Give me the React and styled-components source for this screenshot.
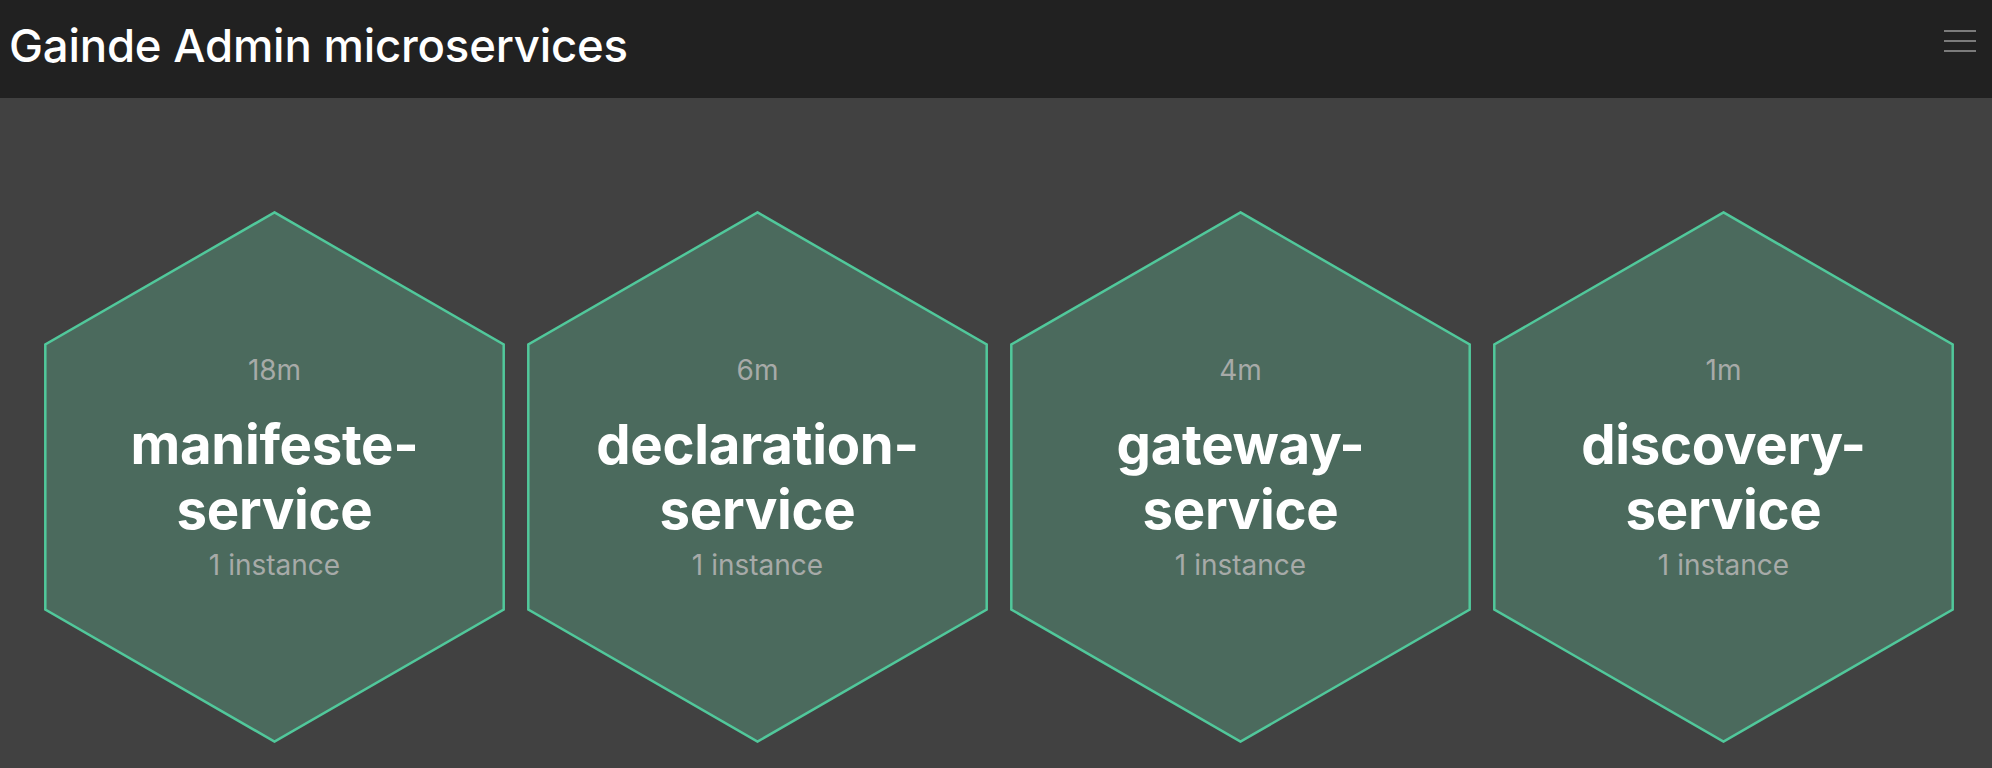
import React from "react";
import styled, { createGlobalStyle } from "styled-components";

const GlobalStyle = createGlobalStyle`
  html, body {
    margin: 0;
    padding: 0;
    background: #414141;
    font-family: Inter, "Noto Sans", "Liberation Sans", sans-serif;
    -webkit-font-smoothing: antialiased;
  }
  * { box-sizing: border-box; }
`;

const Page = styled.div`
  min-height: 768px;
  background: #414141;
  display: flex;
  flex-direction: column;
`;

const TopBar = styled.header`
  height: 98px;
  background: #212121;
  display: flex;
  align-items: center;
  justify-content: space-between;
  padding: 0 16px 0 9px;
`;

const Title = styled.h1`
  margin: 0;
  margin-top: -7px;
  font-size: 45.5px;
  font-weight: 500;
  color: #ffffff;
  letter-spacing: -0.2px;
`;

const MenuButton = styled.button`
  background: none;
  border: none;
  padding: 0;
  width: 32px;
  height: 22px;
  margin-top: -16px;
  display: flex;
  flex-direction: column;
  justify-content: space-between;
  cursor: pointer;
`;

const MenuLine = styled.span`
  display: block;
  height: 2px;
  width: 32px;
  background: #7b7b7b;
`;

const Hive = styled.main`
  display: flex;
  gap: 22px;
  padding: 113px 0 0 44px;
`;

const HexCard = styled.div`
  position: relative;
  width: 461px;
  height: 532px;
  flex: none;
  display: flex;
  flex-direction: column;
  align-items: center;
  justify-content: flex-start;
  padding-top: 142px;
  text-align: center;
`;

const HexShape = styled.svg`
  position: absolute;
  inset: 0;
  width: 100%;
  height: 100%;
  z-index: 0;
`;

const Age = styled.div`
  position: relative;
  font-size: 28px;
  line-height: 34px;
  color: #a7aaa8;
`;

const ServiceName = styled.div`
  position: relative;
  margin-top: 25px;
  max-width: 390px;
  font-size: 54.5px;
  font-weight: 700;
  line-height: 65px;
  color: #ffffff;
  letter-spacing: -0.3px;
`;

const Instances = styled.div`
  position: relative;
  margin-top: 6px;
  font-size: 28px;
  line-height: 34px;
  color: #a7aaa8;
`;

const services = [
  { name: "manifeste-service", age: "18m", instances: 1 },
  { name: "declaration-service", age: "6m", instances: 1 },
  { name: "gateway-service", age: "4m", instances: 1 },
  { name: "discovery-service", age: "1m", instances: 1 },
];

function Hexagon() {
  return (
    <HexShape viewBox="0 0 461 532" preserveAspectRatio="none">
      <polygon
        points="230.5,1.4 459.7,133.5 459.7,398.5 230.5,530.6 1.3,398.5 1.3,133.5"
        fill="#4b6a5d"
        stroke="#51c89b"
        strokeWidth="2.5"
      />
    </HexShape>
  );
}

export default function App() {
  return (
    <>
      <GlobalStyle />
      <Page>
        <TopBar>
          <Title>Gainde Admin microservices</Title>
          <MenuButton aria-label="menu">
            <MenuLine />
            <MenuLine />
            <MenuLine />
          </MenuButton>
        </TopBar>
        <Hive>
          {services.map((s) => (
            <HexCard key={s.name}>
              <Hexagon />
              <Age>{s.age}</Age>
              <ServiceName>{s.name}</ServiceName>
              <Instances>
                {s.instances} instance{s.instances > 1 ? "s" : ""}
              </Instances>
            </HexCard>
          ))}
        </Hive>
      </Page>
    </>
  );
}
